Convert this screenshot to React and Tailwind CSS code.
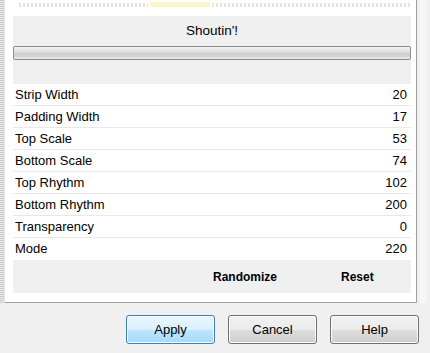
import React from "react";

const rows = [
  ["Strip Width", "20"],
  ["Padding Width", "17"],
  ["Top Scale", "53"],
  ["Bottom Scale", "74"],
  ["Top Rhythm", "102"],
  ["Bottom Rhythm", "200"],
  ["Transparency", "0"],
  ["Mode", "220"],
];

function Btn({ children, primary }) {
  return (
    <div
      className={
        "w-[89px] h-[29px] rounded-[3px] border flex items-center justify-center text-[13px] text-black " +
        (primary
          ? "border-[#3c7fb1] bg-[linear-gradient(#eaf6fd_0%,#d9f0fc_50%,#bee6fd_51%,#a7d9f5_100%)] shadow-[inset_0_0_0_1px_#fbfdfe]"
          : "border-[#707070] bg-[linear-gradient(#f2f2f2_0%,#ebebeb_50%,#dddddd_51%,#cfcfcf_100%)] shadow-[inset_0_0_0_1px_#fcfcfc]")
      }
    >
      {children}
    </div>
  );
}

export default function App() {
  return (
    <div
      className="w-[430px] h-[353px] bg-[#f0f0f0] flex flex-col overflow-hidden"
      style={{ fontFamily: "'Liberation Sans', Arial, sans-serif" }}
    >
      <div className="flex h-[303px]">
        <div className="w-[4px] h-full bg-[repeating-linear-gradient(#c8c8c8_0px,#c8c8c8_1px,#ececec_1px,#ececec_2px)]" />
        <div className="w-[1px] h-full bg-[#e4e4e4]" />
        <div className="w-[412px] h-full bg-white border-r border-b border-[#a0a0a0] flex flex-col pl-[8px] pr-[6px]">
          <div className="h-[7px] mt-[1px] flex items-center gap-[2px]">
            <div className="w-[130px] h-[4px] ml-[6px] bg-[repeating-linear-gradient(90deg,#e2e2e2_0px,#e2e2e2_2px,#ffffff_2px,#ffffff_4px)]" />
            <div className="w-[60px] h-[5px] bg-[#fbf6c8]" />
            <div className="w-[200px] h-[4px] bg-[repeating-linear-gradient(90deg,#e4e4e4_0px,#e4e4e4_2px,#ffffff_2px,#ffffff_4px)]" />
          </div>
          <div className="mt-[8px] h-[68px] w-[398px] bg-[#f0f0f0] flex flex-col">
            <div className="h-[30px] flex items-center justify-center text-[13.5px] text-black pt-[1px]">
              Shoutin'!
            </div>
            <div className="h-[14px] rounded-[2px] border border-[#8c8c8c] bg-[linear-gradient(#f4f4f4_0%,#e2e2e2_35%,#cfcfcf_55%,#d8d8d8_80%,#ececec_100%)]" />
          </div>
          <div className="w-[398px] flex flex-col">
            {rows.map(([label, value], i) => (
              <div
                key={label}
                className={
                  "h-[22px] flex items-center justify-between pl-[2px] pr-[4px] text-[13px] text-black " +
                  (i < rows.length - 1 ? "border-b border-[#e8e8e8]" : "")
                }
              >
                <span>{label}</span>
                <span>{value}</span>
              </div>
            ))}
          </div>
          <div className="h-[33px] w-[398px] bg-[#f0f0f0] flex items-center text-[12px] font-bold text-black">
            <span className="ml-[200px]">Randomize</span>
            <span className="ml-[64px]">Reset</span>
          </div>
        </div>
        <div className="w-[3px] h-full" />
        <div className="w-[6px] h-full bg-[#f7f7f7]" />
      </div>
      <div className="flex gap-[13px] pl-[126px] mt-[12px]">
        <Btn primary>Apply</Btn>
        <Btn>Cancel</Btn>
        <Btn>Help</Btn>
      </div>
    </div>
  );
}
